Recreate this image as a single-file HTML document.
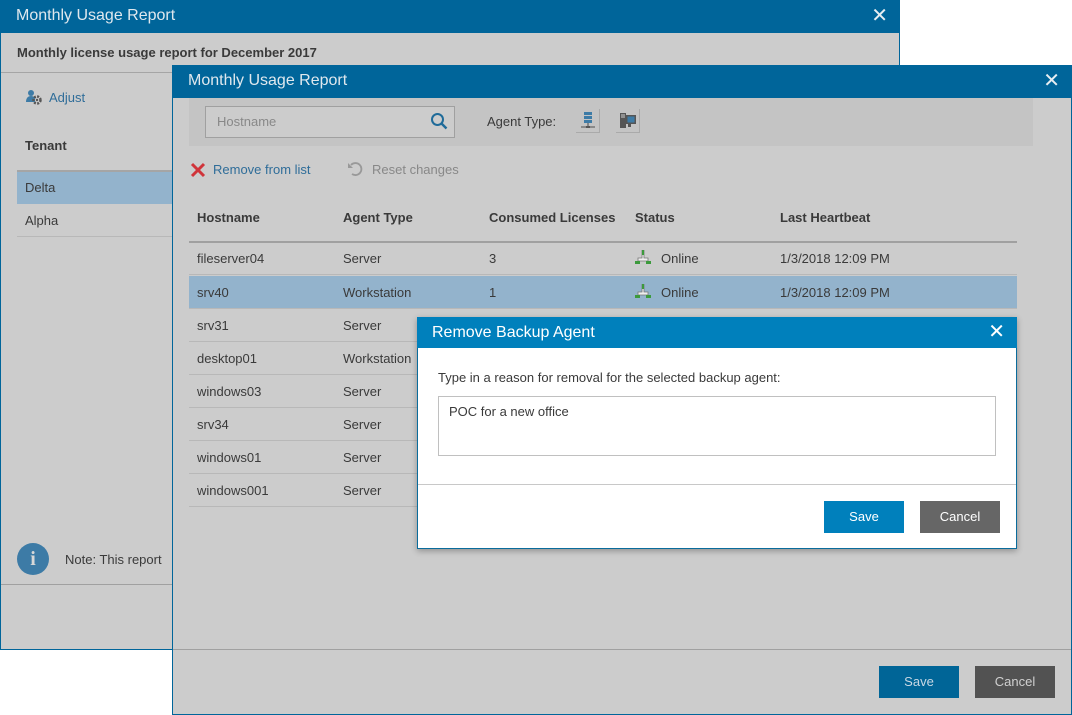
<!DOCTYPE html>
<html><head><meta charset="utf-8"><style>
*{margin:0;padding:0;box-sizing:border-box}
body{width:1072px;height:715px;background:#fff;position:relative;overflow:hidden;font-family:"Liberation Sans",sans-serif;font-size:13px;color:#3a3a3a}
.a{position:absolute}
.tb{background:#00659a;color:#dfe8ee;font-size:16px;padding-left:16px;line-height:32px}
.x{position:absolute;right:12px;top:0;font-size:20px;color:#e8eef2}
.t{position:absolute;white-space:nowrap}
.b{font-weight:bold}
.row{position:absolute;left:189px;width:828px;height:33px;border-bottom:1px solid #b8b8b8}
.row span{position:absolute;top:9px;white-space:nowrap}
.btn{position:absolute;color:#fff;text-align:center;font-size:13px;line-height:32px;width:80px;height:32px}
</style></head><body>
<!-- back window -->
<div class="a" style="left:0;top:0;width:900px;height:650px;background:#cccccc;border:1px solid #00659a">
 <div class="a tb" style="left:-1px;top:-1px;width:900px;height:33px">Monthly Usage Report<span class="x">✕</span></div>
 <div class="t b" style="left:16px;top:44px">Monthly license usage report for December 2017</div>
 <div class="a" style="left:0;top:71px;width:898px;border-top:1px solid #a5a5a5"></div>
 <svg class="a" style="left:24px;top:88px" width="18" height="16" viewBox="0 0 18 16"><circle cx="6" cy="4" r="3" fill="#3d7ba6"/><path d="M1 13c0-4 2-6 5-6s4 2 4 3v3z" fill="#3d7ba6"/><circle cx="12" cy="11" r="3.5" fill="none" stroke="#555" stroke-width="2.5" stroke-dasharray="2 1.3"/><circle cx="12" cy="11" r="1.2" fill="#555"/></svg>
 <div class="t" style="left:48px;top:89px;color:#2f6d99">Adjust</div>
 <div class="t b" style="left:24px;top:137px">Tenant</div>
 <div class="a" style="left:16px;top:169px;width:160px;height:34px;background:#93b3cc;border-top:2px solid #a5a5a5"></div>
 <div class="t" style="left:24px;top:179px">Delta</div>
 <div class="t" style="left:24px;top:212px">Alpha</div>
 <div class="a" style="left:16px;top:235px;width:160px;border-top:1px solid #b8b8b8"></div>
 <div class="a" style="left:16px;top:542px;width:32px;height:32px;border-radius:50%;background:#3d7ba6;color:#d8d8d8;font-weight:bold;font-size:20px;text-align:center;line-height:32px;font-family:'Liberation Serif',serif">i</div>
 <div class="t" style="left:64px;top:551px">Note: This report</div>
 <div class="a" style="left:0;top:583px;width:898px;border-top:1px solid #a0a0a0"></div>
</div>
<!-- front window -->
<div class="a" style="left:172px;top:65px;width:900px;height:650px;background:#cccccc;border:1px solid #00659a">
 <div class="a tb" style="left:-1px;top:-1px;width:900px;height:33px">Monthly Usage Report<span class="x">✕</span></div>
 <div class="a" style="left:16px;top:32px;width:844px;height:48px;background:#c4c4c4"></div>
 <div class="a" style="left:32px;top:40px;width:250px;height:32px;border:1px solid #a0a0a0;background:#cccccc"></div>
 <div class="t" style="left:44px;top:48px;color:#888">Hostname</div>
 <svg class="a" style="left:257px;top:46px" width="18" height="18" viewBox="0 0 18 18"><circle cx="7.5" cy="7.5" r="5.5" fill="none" stroke="#1f6b99" stroke-width="2"/><path d="M11.5 11.5l5 5" stroke="#1f6b99" stroke-width="2.4"/></svg>
 <div class="t" style="left:314px;top:48px">Agent Type:</div>
 <div class="a" style="left:403px;top:43px;width:24px;height:24px;border-right:1px solid #aaa;border-bottom:1px solid #aaa"></div>
 <svg class="a" style="left:405px;top:45px" width="20" height="20" viewBox="0 0 20 20"><rect x="6" y="1" width="8" height="3" fill="#3d7ba6"/><rect x="6" y="5" width="8" height="3" fill="#3d7ba6"/><rect x="6" y="9" width="8" height="3" fill="#3d7ba6"/><path d="M10 12v3M3 16h14" stroke="#666" stroke-width="1.3"/><rect x="8" y="15" width="4" height="2" fill="#555"/></svg>
 <div class="a" style="left:443px;top:43px;width:24px;height:24px;border-right:1px solid #aaa;border-bottom:1px solid #aaa"></div>
 <svg class="a" style="left:445px;top:45px" width="20" height="20" viewBox="0 0 20 20"><rect x="2" y="2" width="6" height="15" fill="#555"/><rect x="8" y="4" width="10" height="9" fill="#555"/><rect x="9.5" y="5.5" width="7" height="6" fill="#3d7ba6"/><rect x="10" y="13" width="3" height="3" fill="#555"/><path d="M3 4h4M3 6h4" stroke="#ccc"/></svg>
 <svg class="a" style="left:17px;top:96px" width="16" height="16" viewBox="0 0 16 16"><path d="M2 2l12 12M14 2L2 14" stroke="#d0343a" stroke-width="3"/></svg>
 <div class="t" style="left:40px;top:96px;color:#2f6d99">Remove from list</div>
 <svg class="a" style="left:174px;top:95px" width="16" height="16" viewBox="0 0 16 16"><path d="M4 4a6 6 0 1 1 1 9" fill="none" stroke="#999" stroke-width="1.8"/><path d="M1 2v5h5z" fill="#999"/></svg>
 <div class="t" style="left:199px;top:96px;color:#888">Reset changes</div>
 <div class="t b" style="left:24px;top:144px">Hostname</div>
 <div class="t b" style="left:170px;top:144px">Agent Type</div>
 <div class="t b" style="left:316px;top:144px">Consumed Licenses</div>
 <div class="t b" style="left:462px;top:144px">Status</div>
 <div class="t b" style="left:607px;top:144px">Last Heartbeat</div>
 <div class="a" style="left:16px;top:175px;width:828px;border-top:2px solid #a0a0a0"></div>
</div>
<div class="row" style="top:242px"><span style="left:8px">fileserver04</span><span style="left:154px">Server</span><span style="left:300px">3</span><span style="left:446px;top:8px"><svg width="16" height="14" viewBox="0 0 16 14"><path d="M7 0h2v8h4v3H3V8h4z" fill="#eee" stroke="#777" stroke-width=".8"/><rect x="7" y="0" width="2" height="5" fill="#3c9a3c"/><rect x="0" y="11" width="5" height="3" fill="#3c9a3c"/><rect x="11" y="11" width="5" height="3" fill="#3c9a3c"/></svg></span><span style="left:472px">Online</span><span style="left:591px">1/3/2018 12:09 PM</span></div>
<div class="row" style="top:276px;background:#93b3cc"><span style="left:8px">srv40</span><span style="left:154px">Workstation</span><span style="left:300px">1</span><span style="left:446px;top:8px"><svg width="16" height="14" viewBox="0 0 16 14"><path d="M7 0h2v8h4v3H3V8h4z" fill="#eee" stroke="#777" stroke-width=".8"/><rect x="7" y="0" width="2" height="5" fill="#3c9a3c"/><rect x="0" y="11" width="5" height="3" fill="#3c9a3c"/><rect x="11" y="11" width="5" height="3" fill="#3c9a3c"/></svg></span><span style="left:472px">Online</span><span style="left:591px">1/3/2018 12:09 PM</span></div>
<div class="row" style="top:309px"><span style="left:8px">srv31</span><span style="left:154px">Server</span></div>
<div class="row" style="top:342px"><span style="left:8px">desktop01</span><span style="left:154px">Workstation</span></div>
<div class="row" style="top:375px"><span style="left:8px">windows03</span><span style="left:154px">Server</span></div>
<div class="row" style="top:408px"><span style="left:8px">srv34</span><span style="left:154px">Server</span></div>
<div class="row" style="top:441px"><span style="left:8px">windows01</span><span style="left:154px">Server</span></div>
<div class="row" style="top:474px"><span style="left:8px">windows001</span><span style="left:154px">Server</span></div>
<div class="a" style="left:173px;top:649px;width:898px;border-top:1px solid #a0a0a0"></div>
<div class="btn" style="left:879px;top:666px;background:#006597;color:#c8d8e4">Save</div>
<div class="btn" style="left:975px;top:666px;background:#525252;color:#d0d0d0">Cancel</div>
<!-- modal -->
<div class="a" style="left:417px;top:317px;width:600px;height:232px;background:#fff;border:1px solid #0a6c9c;box-shadow:0 2px 6px rgba(0,0,0,.3)">
 <div class="a" style="left:-1px;top:-1px;width:600px;height:31px;background:#0080bc;color:#fff;font-size:16px;line-height:31px;padding-left:15px">Remove Backup Agent<span class="x" style="right:12px;color:#fff">✕</span></div>
 <div class="t" style="left:20px;top:52px">Type in a reason for removal for the selected backup agent:</div>
 <div class="a" style="left:20px;top:78px;width:558px;height:60px;border:1px solid #c0c0c0"></div>
 <div class="t" style="left:31px;top:86px">POC for a new office</div>
 <div class="a" style="left:0;top:166px;width:598px;border-top:1px solid #c8c8c8"></div>
 <div class="btn" style="left:406px;top:183px;background:#0080bc">Save</div>
 <div class="btn" style="left:502px;top:183px;background:#666">Cancel</div>
</div>
</body></html>
